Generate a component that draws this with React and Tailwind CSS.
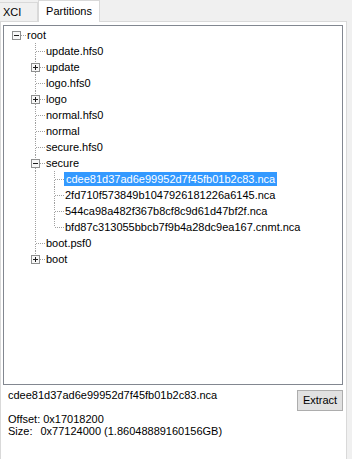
import React from 'react';

const rows = [
  { label: 'root', depth: 0, guides: [], hasNext: false, isRoot: true, expander: '-' },
  { label: 'update.hfs0', depth: 1, guides: [false], hasNext: true },
  { label: 'update', depth: 1, guides: [false], hasNext: true, expander: '+' },
  { label: 'logo.hfs0', depth: 1, guides: [false], hasNext: true },
  { label: 'logo', depth: 1, guides: [false], hasNext: true, expander: '+' },
  { label: 'normal.hfs0', depth: 1, guides: [false], hasNext: true },
  { label: 'normal', depth: 1, guides: [false], hasNext: true },
  { label: 'secure.hfs0', depth: 1, guides: [false], hasNext: true },
  { label: 'secure', depth: 1, guides: [false], hasNext: true, expander: '-' },
  { label: 'cdee81d37ad6e99952d7f45fb01b2c83.nca', depth: 2, guides: [false, true], hasNext: true, selected: true },
  { label: '2fd710f573849b1047926181226a6145.nca', depth: 2, guides: [false, true], hasNext: true },
  { label: '544ca98a482f367b8cf8c9d61d47bf2f.nca', depth: 2, guides: [false, true], hasNext: true },
  { label: 'bfd87c313055bbcb7f9b4a28dc9ea167.cnmt.nca', depth: 2, guides: [false, true], hasNext: false },
  { label: 'boot.psf0', depth: 1, guides: [false], hasNext: true },
  { label: 'boot', depth: 1, guides: [false], hasNext: false, expander: '+' },
];

const dot = { stroke: '#a0a0a0', strokeWidth: 1, strokeDasharray: '1 1' };

// one 19x16 indent cell of the tree's connecting lines
const Guide = ({ on }) => (
  <svg width="19" height="16" className="shrink-0">
    {on && <line x1="9.5" y1="0" x2="9.5" y2="16" {...dot} />}
  </svg>
);

const Connector = ({ row }) => (
  <svg width="19" height="16" className="shrink-0">
    {!row.isRoot && <line x1="9.5" y1="0" x2="9.5" y2="8" {...dot} />}
    {row.hasNext && <line x1="9.5" y1="9" x2="9.5" y2="16" {...dot} />}
    <line x1={row.expander ? 14 : 10} y1="8.5" x2="19" y2="8.5" {...dot} />
    {row.expander && (
      <g>
        <rect x="5.5" y="4.5" width="8" height="8" fill="#f7f7f7" stroke="#8e8f8f" />
        <line x1="7" y1="8.5" x2="12" y2="8.5" stroke="#1e1e1e" />
        {row.expander === '+' && <line x1="9.5" y1="6" x2="9.5" y2="11" stroke="#1e1e1e" />}
      </g>
    )}
  </svg>
);

const TreeRow = ({ row }) => (
  <div className="flex h-[16px] items-center">
    {row.guides.map((on, i) => (
      <Guide key={i} on={on} />
    ))}
    <Connector row={row} />
    <span
      className={
        row.selected
          ? 'h-[14px] bg-[#3399ff] px-[2px] leading-[14px] text-white'
          : 'h-[14px] px-[1px] leading-[14px] text-black'
      }
    >
      {row.label}
    </span>
  </div>
);

export default function App() {
  return (
    <div
      className="h-[459px] w-[352px] overflow-hidden bg-[#f0f0f0] text-[11px] text-black"
      style={{ fontFamily: '"Liberation Sans", Arial, sans-serif' }}
    >
      <div className="flex h-[21px] items-end">
        <div className="flex h-[19px] w-[38px] items-center border-r border-t border-[#d9d9d9] pl-[3px]">XCI</div>
        <div className="relative z-10 -mb-px flex h-[22px] w-[62px] items-center justify-center border border-b-0 border-[#d9d9d9] bg-white">
          Partitions
        </div>
      </div>

      <div className="h-[438px] w-[347px] border border-b-0 border-[#d9d9d9] bg-white">
        <div className="ml-[2px] mt-[3px] h-[360px] w-[340px] border border-[#828790] bg-white pl-[3px] pt-[1px]">
          {rows.map((row) => (
            <TreeRow key={row.label} row={row} />
          ))}
        </div>

        <div className="mt-[5px] flex items-start justify-between pl-[7px] pr-[3px]">
          <div className="-mt-px leading-[13px]">cdee81d37ad6e99952d7f45fb01b2c83.nca</div>
          <button className="h-[21px] w-[46px] border border-[#adadad] bg-[#e1e1e1] leading-[19px]">Extract</button>
        </div>

        <div className="mt-[2px] pl-[7px] leading-[12px]">
          <div>Offset: 0x17018200</div>
          <div>
            Size:<span className="ml-[8px]">0x77124000 (1.86048889160156GB)</span>
          </div>
        </div>
      </div>
    </div>
  );
}
